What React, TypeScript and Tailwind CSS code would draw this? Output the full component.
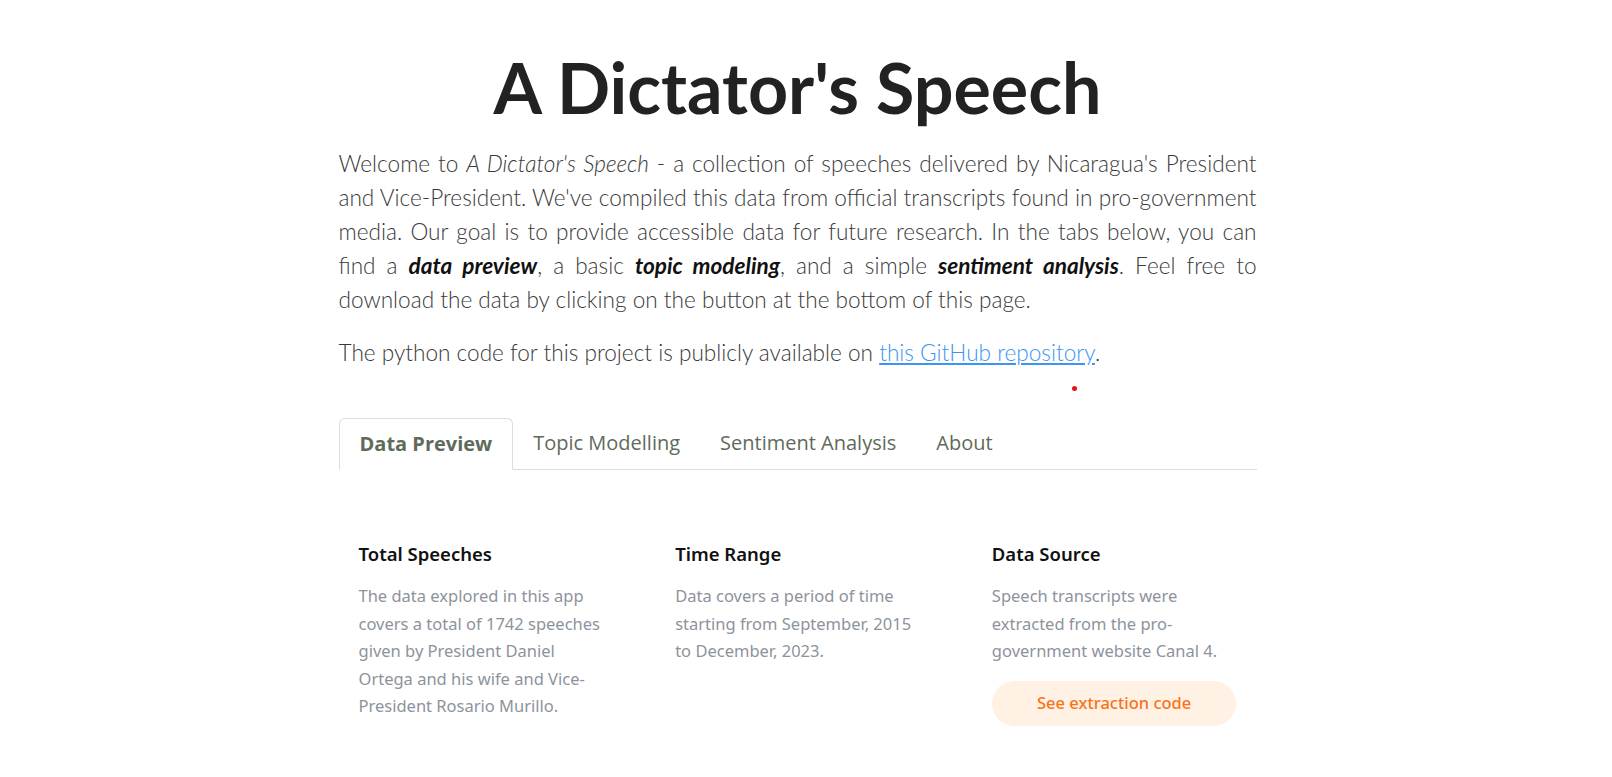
import React from 'react'

const tabs = ['Data Preview', 'Topic Modelling', 'Sentiment Analysis', 'About']

const cards = [
  {
    title: 'Total Speeches',
    text: 'The data explored in this app covers a total of 1742 speeches given by President Daniel Ortega and his wife and Vice-President Rosario Murillo.',
  },
  {
    title: 'Time Range',
    text: 'Data covers a period of time starting from September, 2015 to December, 2023.',
  },
  {
    title: 'Data Source',
    text: 'Speech transcripts were extracted from the pro-government website Canal 4.',
    button: 'See extraction code',
  },
]

export default function App() {
  return (
    <div className="min-h-screen bg-white">
      <div className="w-[1595px]">
        <div className="mx-auto w-[918px] pt-[44px]">
          <h1 className="text-center font-['Lato',sans-serif] text-[70px] font-bold leading-[86px] text-[#222222]">
            A Dictator's Speech
          </h1>

          <p className="mt-[17px] text-justify font-['Lato',sans-serif] text-[22.6px] font-light leading-[34px] text-[#3a3a3a]">
            Welcome to <em>A Dictator's Speech</em> - a collection of speeches delivered by
            Nicaragua's President and Vice-President. We've compiled this data from official
            transcripts found in pro-government media. Our goal is to provide accessible data for
            future research. In the tabs below, you can find a{' '}
            <strong className="font-bold italic text-[#111]">data preview</strong>, a basic{' '}
            <strong className="font-bold italic text-[#111]">topic modeling</strong>, and a simple{' '}
            <strong className="font-bold italic text-[#111]">sentiment analysis</strong>. Feel free
            to download the data by clicking on the button at the bottom of this page.
          </p>

          <p className="mt-[19px] font-['Lato',sans-serif] text-[22.6px] font-light leading-[34px] text-[#3a3a3a]">
            The python code for this project is publicly available on{' '}
            <a href="#" className="text-[#3d95f0] underline">
              this GitHub repository
            </a>
            .
          </p>

          <div className="mt-[16px] ml-[733px] h-[5px] w-[5px] rounded-full bg-[#e8101a]" />

          <div className="mt-[27px] flex border-b border-[#dddddd] font-['Open_Sans',sans-serif] text-[20px] text-[#5e6b5a]">
            {tabs.map((tab, i) => (
              <div
                key={tab}
                className={
                  i === 0
                    ? '-mb-px rounded-t-md border border-[#dddddd] border-b-white bg-white px-5 py-[10px] font-bold'
                    : 'px-5 py-[10px]'
                }
              >
                {tab}
              </div>
            ))}
          </div>

          <div className="mt-[70px] grid grid-cols-3 gap-[32px] font-['Noto_Sans',sans-serif]">
            {cards.map((card) => (
              <div key={card.title} className="px-5">
                <h3 className="text-[18.5px] font-semibold leading-[28px] text-[#111111]">
                  {card.title}
                </h3>
                <p className="mt-[14px] text-[16.5px] leading-[27.5px] text-[#8d939c]">{card.text}</p>
                {card.button && (
                  <button className="mt-[16px] h-[45px] w-full rounded-full bg-[#fff1e4] text-[16.5px] font-medium text-[#f97316]">
                    {card.button}
                  </button>
                )}
              </div>
            ))}
          </div>
        </div>
      </div>
    </div>
  )
}
